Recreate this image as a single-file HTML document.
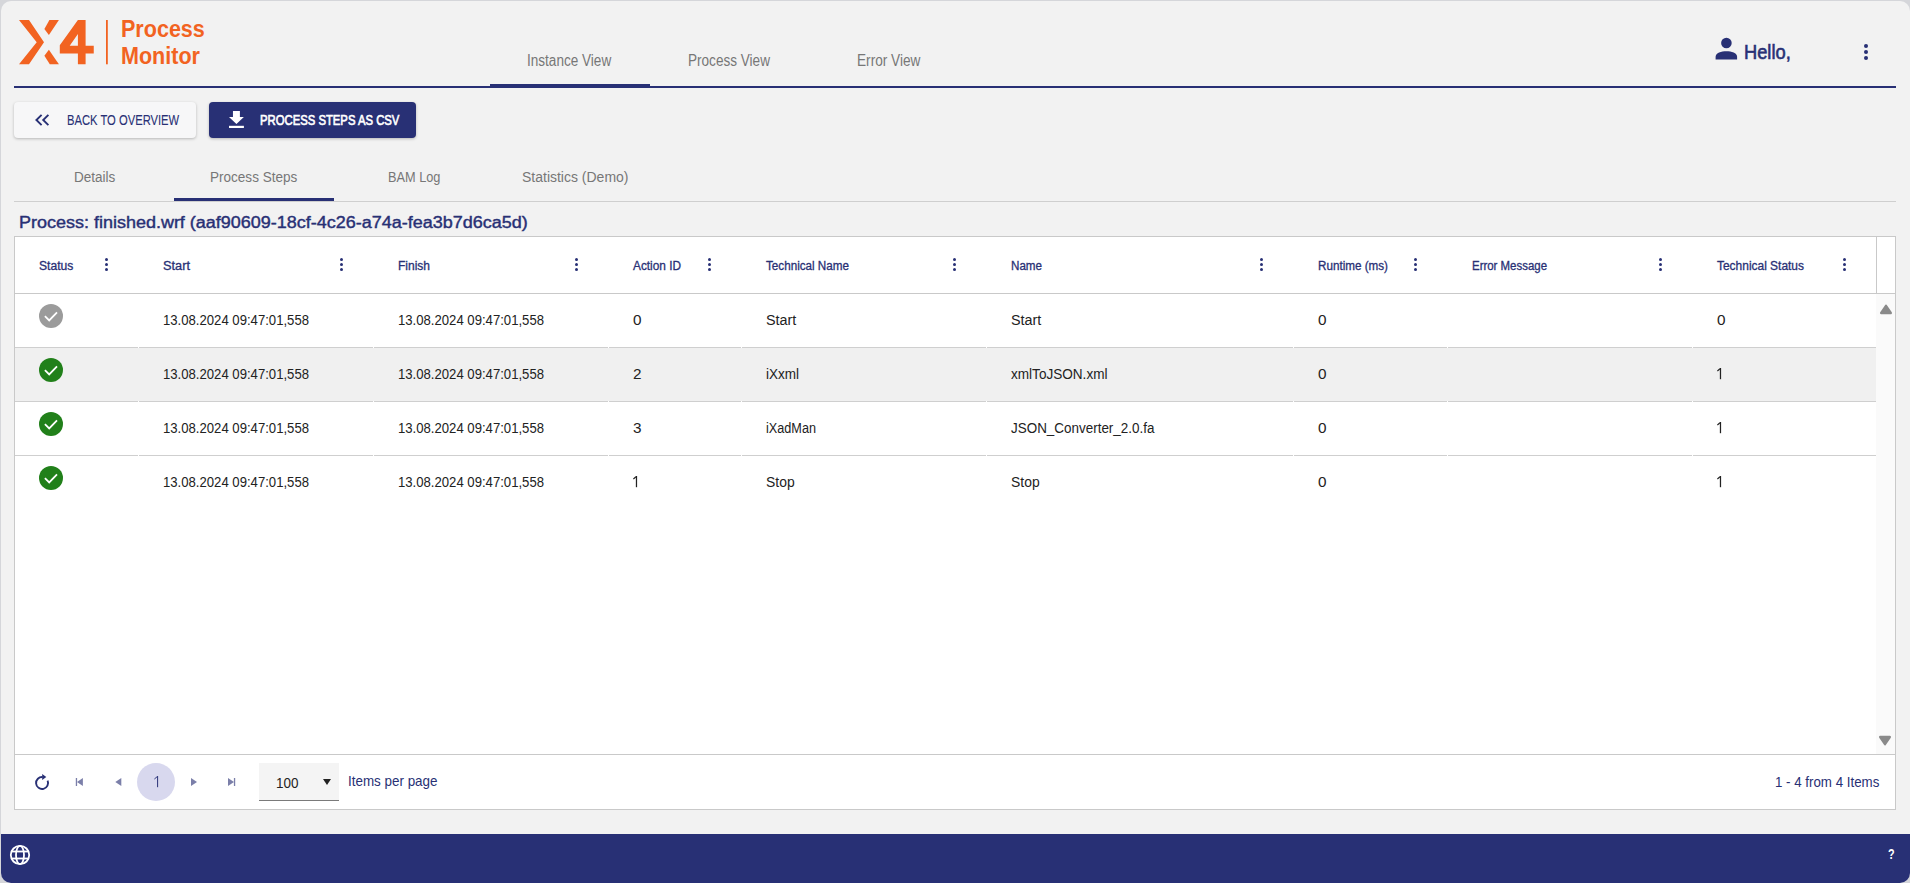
<!DOCTYPE html>
<html><head><meta charset="utf-8">
<style>
*{margin:0;padding:0;box-sizing:border-box}
html,body{width:1910px;height:883px;overflow:hidden;background:#d5d6da;font-family:"Liberation Sans",sans-serif}
.card{position:absolute;left:1px;top:1px;width:1909px;height:882px;background:#f2f2f2;border-radius:10px;overflow:hidden}
.t{position:absolute;white-space:nowrap;transform-origin:0 0}
.bm{display:inline-block;width:0;height:0;vertical-align:baseline}
.a{position:absolute}
.kb{position:absolute;width:3px;height:13px}
.kb i{position:absolute;left:0;width:3px;height:3px;border-radius:50%;background:#283075}
</style></head><body>
<div class="card"></div>
<!-- logo -->
<svg class="a" style="left:0;top:0" width="120" height="80" viewBox="0 0 120 80">
  <g fill="#f26321">
    <polygon points="19,20 29,20 44,42.2 29,64.3 19,64.3 36.7,42.2"/>
    <polygon points="49.4,20 58.9,20 48.9,34.9 44.4,29"/>
    <polygon points="48.9,49.8 58.9,64.3 49.8,64.3 44.4,55.7"/>
    <path d="M77.9,20 L85.6,20 L85.6,45.7 L93.75,45.7 L93.75,53.4 L85.6,53.4 L85.6,64.3 L77.9,64.3 L77.9,53.4 L59.8,53.4 L59.8,45.3 Z M77.9,34 L69.7,45.7 L77.9,45.7 Z" fill-rule="evenodd"/>
    <rect x="106" y="20" width="1.8" height="44.3"/>
  </g>
</svg>
<!-- nav line -->
<div class="a" style="left:14px;top:86px;width:1882px;height:2px;background:#283075"></div>
<div class="a" style="left:490px;top:84px;width:160px;height:4px;background:#283075"></div>
<!-- user icon -->
<svg class="a" style="left:1714px;top:36px" width="25" height="25" viewBox="0 0 25 25">
  <circle cx="12.4" cy="7.0" r="5.3" fill="#283075"/>
  <path d="M1.6,23.4 L1.6,21 C1.6,16.6 7.3,15.3 12.4,15.3 C17.5,15.3 23.1,16.6 23.1,21 L23.1,23.4 Z" fill="#283075"/>
</svg>
<!-- kebab top right -->
<div class="a" style="left:1864px;top:44px;width:4px;height:16px">
  <i class="a" style="left:0;top:0;width:4px;height:4px;border-radius:50%;background:#283075"></i>
  <i class="a" style="left:0;top:6px;width:4px;height:4px;border-radius:50%;background:#283075"></i>
  <i class="a" style="left:0;top:12px;width:4px;height:4px;border-radius:50%;background:#283075"></i>
</div>
<!-- buttons -->
<div class="a" style="left:14px;top:102px;width:182px;height:36px;background:#f7f7f8;border-radius:4px;box-shadow:0 1px 3px rgba(0,0,0,.25)"></div>
<svg class="a" style="left:34px;top:113px" width="16" height="14" viewBox="0 0 16 14">
  <path d="M7.6,1.9 L2.4,7 L7.6,12.1 M14.4,1.9 L9.2,7 L14.4,12.1" stroke="#283075" stroke-width="1.9" fill="none"/>
</svg>
<div class="a" style="left:209px;top:102px;width:207px;height:36px;background:#283075;border-radius:4px;box-shadow:0 1px 3px rgba(0,0,0,.25)"></div>
<svg class="a" style="left:228px;top:111px" width="17" height="18" viewBox="0 0 17 18">
  <path d="M4.95,0 L11.9,0 L11.9,6 L15.9,6 L8.43,13.1 L1,6 L4.95,6 Z" fill="#fff"/>
  <rect x="1" y="14.8" width="14.9" height="2.2" fill="#fff"/>
</svg>
<!-- subtabs line -->
<div class="a" style="left:14px;top:201px;width:1882px;height:1px;background:#cfcfcf"></div>
<div class="a" style="left:174px;top:198px;width:160px;height:3px;background:#283075"></div>
<!-- table -->
<div class="a" style="left:14px;top:236px;width:1882px;height:574px;background:#fff;border:1px solid #c9c9c9"></div>
<div class="a" style="left:15px;top:293px;width:1880px;height:1px;background:#c9c9c9"></div>
<div class="a" style="left:1876px;top:237px;width:1px;height:57px;background:#c9c9c9"></div>
<div class="a" style="left:1876px;top:294px;width:19px;height:460px;background:#fafafa"></div>
<div class="a" style="left:15px;top:348px;width:1861px;height:53px;background:#f0f0f0"></div>
<div class="a" style="left:15px;top:347px;width:123px;height:1px;background:#cfcfcf"></div>
<div class="a" style="left:139px;top:347px;width:234px;height:1px;background:#cfcfcf"></div>
<div class="a" style="left:374px;top:347px;width:234px;height:1px;background:#cfcfcf"></div>
<div class="a" style="left:609px;top:347px;width:132px;height:1px;background:#cfcfcf"></div>
<div class="a" style="left:742px;top:347px;width:244px;height:1px;background:#cfcfcf"></div>
<div class="a" style="left:987px;top:347px;width:306px;height:1px;background:#cfcfcf"></div>
<div class="a" style="left:1294px;top:347px;width:153px;height:1px;background:#cfcfcf"></div>
<div class="a" style="left:1448px;top:347px;width:244px;height:1px;background:#cfcfcf"></div>
<div class="a" style="left:1693px;top:347px;width:183px;height:1px;background:#cfcfcf"></div>
<div class="a" style="left:15px;top:401px;width:123px;height:1px;background:#cfcfcf"></div>
<div class="a" style="left:139px;top:401px;width:234px;height:1px;background:#cfcfcf"></div>
<div class="a" style="left:374px;top:401px;width:234px;height:1px;background:#cfcfcf"></div>
<div class="a" style="left:609px;top:401px;width:132px;height:1px;background:#cfcfcf"></div>
<div class="a" style="left:742px;top:401px;width:244px;height:1px;background:#cfcfcf"></div>
<div class="a" style="left:987px;top:401px;width:306px;height:1px;background:#cfcfcf"></div>
<div class="a" style="left:1294px;top:401px;width:153px;height:1px;background:#cfcfcf"></div>
<div class="a" style="left:1448px;top:401px;width:244px;height:1px;background:#cfcfcf"></div>
<div class="a" style="left:1693px;top:401px;width:183px;height:1px;background:#cfcfcf"></div>
<div class="a" style="left:15px;top:455px;width:123px;height:1px;background:#cfcfcf"></div>
<div class="a" style="left:139px;top:455px;width:234px;height:1px;background:#cfcfcf"></div>
<div class="a" style="left:374px;top:455px;width:234px;height:1px;background:#cfcfcf"></div>
<div class="a" style="left:609px;top:455px;width:132px;height:1px;background:#cfcfcf"></div>
<div class="a" style="left:742px;top:455px;width:244px;height:1px;background:#cfcfcf"></div>
<div class="a" style="left:987px;top:455px;width:306px;height:1px;background:#cfcfcf"></div>
<div class="a" style="left:1294px;top:455px;width:153px;height:1px;background:#cfcfcf"></div>
<div class="a" style="left:1448px;top:455px;width:244px;height:1px;background:#cfcfcf"></div>
<div class="a" style="left:1693px;top:455px;width:183px;height:1px;background:#cfcfcf"></div>
<div class="kb" style="left:105px;top:258px"><i style="top:0"></i><i style="top:5px"></i><i style="top:10px"></i></div>
<div class="kb" style="left:340px;top:258px"><i style="top:0"></i><i style="top:5px"></i><i style="top:10px"></i></div>
<div class="kb" style="left:575px;top:258px"><i style="top:0"></i><i style="top:5px"></i><i style="top:10px"></i></div>
<div class="kb" style="left:708px;top:258px"><i style="top:0"></i><i style="top:5px"></i><i style="top:10px"></i></div>
<div class="kb" style="left:953px;top:258px"><i style="top:0"></i><i style="top:5px"></i><i style="top:10px"></i></div>
<div class="kb" style="left:1260px;top:258px"><i style="top:0"></i><i style="top:5px"></i><i style="top:10px"></i></div>
<div class="kb" style="left:1414px;top:258px"><i style="top:0"></i><i style="top:5px"></i><i style="top:10px"></i></div>
<div class="kb" style="left:1659px;top:258px"><i style="top:0"></i><i style="top:5px"></i><i style="top:10px"></i></div>
<div class="kb" style="left:1843px;top:258px"><i style="top:0"></i><i style="top:5px"></i><i style="top:10px"></i></div>
<!-- status icons -->
<svg class="a" style="left:39px;top:304px" width="24" height="24" viewBox="0 0 24 24"><circle cx="12" cy="12" r="12" fill="#9b9b9b"/><path d="M5.9,12.2 L10.2,16.4 L18.0,8.4" stroke="#fff" stroke-width="1.8" fill="none"/></svg>
<svg class="a" style="left:39px;top:358px" width="24" height="24" viewBox="0 0 24 24"><circle cx="12" cy="12" r="12" fill="#21801a"/><path d="M5.9,12.2 L10.2,16.4 L18.0,8.4" stroke="#fff" stroke-width="1.8" fill="none"/></svg>
<svg class="a" style="left:39px;top:412px" width="24" height="24" viewBox="0 0 24 24"><circle cx="12" cy="12" r="12" fill="#21801a"/><path d="M5.9,12.2 L10.2,16.4 L18.0,8.4" stroke="#fff" stroke-width="1.8" fill="none"/></svg>
<svg class="a" style="left:39px;top:466px" width="24" height="24" viewBox="0 0 24 24"><circle cx="12" cy="12" r="12" fill="#21801a"/><path d="M5.9,12.2 L10.2,16.4 L18.0,8.4" stroke="#fff" stroke-width="1.8" fill="none"/></svg>
<!-- scroll arrows -->
<svg class="a" style="left:1878px;top:303px" width="16" height="12" viewBox="0 0 16 12"><path d="M3.2,10 L8,2.8 L12.8,10 Z" fill="#8a8a8a" stroke="#8a8a8a" stroke-width="2.4" stroke-linejoin="round"/></svg>
<svg class="a" style="left:1877.2px;top:734.5px" width="16" height="12" viewBox="0 0 16 12"><path d="M3.2,2 L8,9.2 L12.8,2 Z" fill="#8a8a8a" stroke="#8a8a8a" stroke-width="2.4" stroke-linejoin="round"/></svg>
<!-- pagination -->
<div class="a" style="left:15px;top:754px;width:1880px;height:1px;background:#c9c9c9"></div>
<svg class="a" style="left:33px;top:772px" width="18" height="20" viewBox="0 0 18 20">
  <path d="M14.6,8.6 A6,6 0 1 1 9.6,5" stroke="#283075" stroke-width="1.9" fill="none"/>
  <path d="M9.2,2.1 L13.3,5 L9.2,7.9 Z" fill="#283075"/>
</svg>
<svg class="a" style="left:74px;top:776px" width="12" height="12" viewBox="0 0 12 12"><rect x="1.8" y="2" width="1.3" height="8" fill="#7b7fa9"/><path d="M3,6 L8.9,2 L8.9,10 Z" fill="#7b7fa9"/></svg>
<svg class="a" style="left:113px;top:776px" width="12" height="12" viewBox="0 0 12 12"><path d="M2.3,6 L8.3,2 L8.3,10 Z" fill="#7b7fa9"/></svg>
<div class="a" style="left:137px;top:763px;width:38px;height:38px;border-radius:50%;background:#d8d8ee"></div>
<svg class="a" style="left:189px;top:776px" width="12" height="12" viewBox="0 0 12 12"><path d="M8,6 L2,2 L2,10 Z" fill="#7b7fa9"/></svg>
<svg class="a" style="left:226px;top:776px" width="12" height="12" viewBox="0 0 12 12"><path d="M8,6 L2,2 L2,10 Z" fill="#7b7fa9"/><rect x="7.9" y="2" width="1.3" height="8" fill="#7b7fa9"/></svg>
<div class="a" style="left:259px;top:763px;width:80px;height:38px;background:#f4f4f4;border-bottom:1px solid #7a7a7a"></div>
<svg class="a" style="left:321px;top:776px" width="12" height="12" viewBox="0 0 12 12"><path d="M2,3 L10,3 L6,9 Z" fill="#222"/></svg>
<!-- footer -->
<div class="a" style="left:1px;top:834px;width:1909px;height:49px;background:#283075;border-radius:0 0 10px 10px"></div>
<svg class="a" style="left:9px;top:844px" width="22" height="22" viewBox="0 0 22 22">
  <g stroke="#fff" stroke-width="1.8" fill="none">
    <circle cx="11" cy="11" r="9.2"/>
    <ellipse cx="11" cy="11" rx="4" ry="9.2"/>
    <line x1="2" y1="7.5" x2="20" y2="7.5"/>
    <line x1="2" y1="14.5" x2="20" y2="14.5"/>
  </g>
</svg>
<div class="t" id="t0" style="left:121.40px;top:18.00px;font-size:23px;line-height:23px;color:#f26321;font-weight:700;transform:scaleX(0.9363);">Process<span class="bm"></span></div>
<div class="t" id="t1" style="left:121.40px;top:45.01px;font-size:23px;line-height:23px;color:#f26321;font-weight:700;transform:scaleX(0.9359);">Monitor<span class="bm"></span></div>
<div class="t" id="t2" style="left:527.20px;top:53.01px;font-size:16px;line-height:16px;color:#777777;transform:scaleX(0.8475);">Instance View<span class="bm"></span></div>
<div class="t" id="t3" style="left:688.10px;top:53.01px;font-size:16px;line-height:16px;color:#777777;transform:scaleX(0.8480);">Process View<span class="bm"></span></div>
<div class="t" id="t4" style="left:857.10px;top:53.01px;font-size:16px;line-height:16px;color:#777777;transform:scaleX(0.8529);">Error View<span class="bm"></span></div>
<div class="t" id="t5" style="left:1743.60px;top:42.00px;font-size:20.5px;line-height:20.5px;color:#283075;transform:scaleX(0.8912);-webkit-text-stroke:0.6px #283075;">Hello,<span class="bm"></span></div>
<div class="t" id="t6" style="left:66.80px;top:113.01px;font-size:14px;line-height:14px;color:#283075;transform:scaleX(0.8011);-webkit-text-stroke:0.1px #283075;">BACK TO OVERVIEW<span class="bm"></span></div>
<div class="t" id="t7" style="left:260.40px;top:113.01px;font-size:14px;line-height:14px;color:#ffffff;transform:scaleX(0.8069);-webkit-text-stroke:0.65px #ffffff;">PROCESS STEPS AS CSV<span class="bm"></span></div>
<div class="t" id="t8" style="left:73.60px;top:169.00px;font-size:15.5px;line-height:15.5px;color:#777777;transform:scaleX(0.8713);">Details<span class="bm"></span></div>
<div class="t" id="t9" style="left:210.40px;top:169.00px;font-size:15.5px;line-height:15.5px;color:#777777;transform:scaleX(0.8734);">Process Steps<span class="bm"></span></div>
<div class="t" id="t10" style="left:387.70px;top:169.00px;font-size:15.5px;line-height:15.5px;color:#777777;transform:scaleX(0.8220);">BAM Log<span class="bm"></span></div>
<div class="t" id="t11" style="left:521.50px;top:169.00px;font-size:15.5px;line-height:15.5px;color:#777777;transform:scaleX(0.9025);">Statistics (Demo)<span class="bm"></span></div>
<div class="t" id="t12" style="left:19.00px;top:215.00px;font-size:16px;line-height:16px;color:#283075;transform:scaleX(1.1237);-webkit-text-stroke:0.4px #283075;">Process: finished.wrf (aaf90609-18cf-4c26-a74a-fea3b7d6ca5d)<span class="bm"></span></div>
<div class="t" id="t13" style="left:39.30px;top:260.01px;font-size:12.3px;line-height:12.3px;color:#283075;transform:scaleX(0.9842);-webkit-text-stroke:0.3px #283075;">Status<span class="bm"></span></div>
<div class="t" id="t14" style="left:163.30px;top:260.01px;font-size:12.3px;line-height:12.3px;color:#283075;transform:scaleX(1.0385);-webkit-text-stroke:0.3px #283075;">Start<span class="bm"></span></div>
<div class="t" id="t15" style="left:398.30px;top:260.01px;font-size:12.3px;line-height:12.3px;color:#283075;transform:scaleX(0.9756);-webkit-text-stroke:0.3px #283075;">Finish<span class="bm"></span></div>
<div class="t" id="t16" style="left:633.30px;top:260.01px;font-size:12.3px;line-height:12.3px;color:#283075;transform:scaleX(0.9619);-webkit-text-stroke:0.3px #283075;">Action ID<span class="bm"></span></div>
<div class="t" id="t17" style="left:766.30px;top:260.01px;font-size:12.3px;line-height:12.3px;color:#283075;transform:scaleX(0.9486);-webkit-text-stroke:0.3px #283075;">Technical Name<span class="bm"></span></div>
<div class="t" id="t18" style="left:1011.30px;top:260.01px;font-size:12.3px;line-height:12.3px;color:#283075;transform:scaleX(0.9451);-webkit-text-stroke:0.3px #283075;">Name<span class="bm"></span></div>
<div class="t" id="t19" style="left:1318.30px;top:260.01px;font-size:12.3px;line-height:12.3px;color:#283075;transform:scaleX(0.9485);-webkit-text-stroke:0.3px #283075;">Runtime (ms)<span class="bm"></span></div>
<div class="t" id="t20" style="left:1472.30px;top:260.01px;font-size:12.3px;line-height:12.3px;color:#283075;transform:scaleX(0.9299);-webkit-text-stroke:0.3px #283075;">Error Message<span class="bm"></span></div>
<div class="t" id="t21" style="left:1717.30px;top:260.01px;font-size:12.3px;line-height:12.3px;color:#283075;transform:scaleX(0.9715);-webkit-text-stroke:0.3px #283075;">Technical Status<span class="bm"></span></div>
<div class="t" id="t22" style="left:163.00px;top:312.01px;font-size:15.3px;line-height:15.3px;color:#222222;transform:scaleX(0.8581);">13.08.2024 09:47:01,558<span class="bm"></span></div>
<div class="t" id="t23" style="left:398.00px;top:312.01px;font-size:15.3px;line-height:15.3px;color:#222222;transform:scaleX(0.8581);">13.08.2024 09:47:01,558<span class="bm"></span></div>
<div class="t" id="t24" style="left:633.00px;top:312.01px;font-size:15.3px;line-height:15.3px;color:#222222;">0<span class="bm"></span></div>
<div class="t" id="t25" style="left:766.00px;top:312.01px;font-size:15.3px;line-height:15.3px;color:#222222;transform:scaleX(0.9381);">Start<span class="bm"></span></div>
<div class="t" id="t26" style="left:1011.00px;top:312.01px;font-size:15.3px;line-height:15.3px;color:#222222;transform:scaleX(0.9381);">Start<span class="bm"></span></div>
<div class="t" id="t27" style="left:1318.00px;top:312.01px;font-size:15.3px;line-height:15.3px;color:#222222;">0<span class="bm"></span></div>
<div class="t" id="t28" style="left:1717.00px;top:312.01px;font-size:15.3px;line-height:15.3px;color:#222222;">0<span class="bm"></span></div>
<div class="t" id="t29" style="left:163.00px;top:366.01px;font-size:15.3px;line-height:15.3px;color:#222222;transform:scaleX(0.8581);">13.08.2024 09:47:01,558<span class="bm"></span></div>
<div class="t" id="t30" style="left:398.00px;top:366.01px;font-size:15.3px;line-height:15.3px;color:#222222;transform:scaleX(0.8581);">13.08.2024 09:47:01,558<span class="bm"></span></div>
<div class="t" id="t31" style="left:633.00px;top:366.01px;font-size:15.3px;line-height:15.3px;color:#222222;">2<span class="bm"></span></div>
<div class="t" id="t32" style="left:766.00px;top:366.01px;font-size:15.3px;line-height:15.3px;color:#222222;transform:scaleX(0.8824);">iXxml<span class="bm"></span></div>
<div class="t" id="t33" style="left:1011.00px;top:366.01px;font-size:15.3px;line-height:15.3px;color:#222222;transform:scaleX(0.8869);">xmlToJSON.xml<span class="bm"></span></div>
<div class="t" id="t34" style="left:1318.00px;top:366.01px;font-size:15.3px;line-height:15.3px;color:#222222;">0<span class="bm"></span></div>
<div class="t" id="t35" style="left:163.00px;top:420.01px;font-size:15.3px;line-height:15.3px;color:#222222;transform:scaleX(0.8581);">13.08.2024 09:47:01,558<span class="bm"></span></div>
<div class="t" id="t36" style="left:398.00px;top:420.01px;font-size:15.3px;line-height:15.3px;color:#222222;transform:scaleX(0.8581);">13.08.2024 09:47:01,558<span class="bm"></span></div>
<div class="t" id="t37" style="left:633.00px;top:420.01px;font-size:15.3px;line-height:15.3px;color:#222222;">3<span class="bm"></span></div>
<div class="t" id="t38" style="left:766.00px;top:420.01px;font-size:15.3px;line-height:15.3px;color:#222222;transform:scaleX(0.8278);">iXadMan<span class="bm"></span></div>
<div class="t" id="t39" style="left:1011.00px;top:420.01px;font-size:15.3px;line-height:15.3px;color:#222222;transform:scaleX(0.8788);">JSON_Converter_2.0.fa<span class="bm"></span></div>
<div class="t" id="t40" style="left:1318.00px;top:420.01px;font-size:15.3px;line-height:15.3px;color:#222222;">0<span class="bm"></span></div>
<div class="t" id="t41" style="left:163.00px;top:474.01px;font-size:15.3px;line-height:15.3px;color:#222222;transform:scaleX(0.8581);">13.08.2024 09:47:01,558<span class="bm"></span></div>
<div class="t" id="t42" style="left:398.00px;top:474.01px;font-size:15.3px;line-height:15.3px;color:#222222;transform:scaleX(0.8581);">13.08.2024 09:47:01,558<span class="bm"></span></div>
<div class="t" id="t43" style="left:766.00px;top:474.01px;font-size:15.3px;line-height:15.3px;color:#222222;transform:scaleX(0.9094);">Stop<span class="bm"></span></div>
<div class="t" id="t44" style="left:1011.00px;top:474.01px;font-size:15.3px;line-height:15.3px;color:#222222;transform:scaleX(0.9094);">Stop<span class="bm"></span></div>
<div class="t" id="t45" style="left:1318.00px;top:474.01px;font-size:15.3px;line-height:15.3px;color:#222222;">0<span class="bm"></span></div>
<div class="t" id="t46" style="left:275.70px;top:775.01px;font-size:15px;line-height:15px;color:#222222;transform:scaleX(0.8982);">100<span class="bm"></span></div>
<div class="t" id="t47" style="left:347.90px;top:773.01px;font-size:15px;line-height:15px;color:#283075;transform:scaleX(0.8946);">Items per page<span class="bm"></span></div>
<div class="t" id="t48" style="left:1774.50px;top:774.00px;font-size:15px;line-height:15px;color:#283075;transform:scaleX(0.8873);">1 - 4 from 4 Items<span class="bm"></span></div>
<div class="t" id="t49" style="left:1888.40px;top:846.01px;font-size:15px;line-height:15px;color:#ffffff;font-weight:700;transform:scaleX(0.7213);">?<span class="bm"></span></div>
<svg class="a" style="left:1717.00px;top:367.80px" width="6" height="12" viewBox="0 0 6 12"><rect x="2.85" y="0" width="1.25" height="11.2" fill="#222222"/><path d="M0.4,3.0 L3.0,0.8" stroke="#222222" stroke-width="1.16" fill="none"/></svg>
<svg class="a" style="left:1717.00px;top:421.80px" width="6" height="12" viewBox="0 0 6 12"><rect x="2.85" y="0" width="1.25" height="11.2" fill="#222222"/><path d="M0.4,3.0 L3.0,0.8" stroke="#222222" stroke-width="1.16" fill="none"/></svg>
<svg class="a" style="left:633.00px;top:475.80px" width="6" height="12" viewBox="0 0 6 12"><rect x="2.85" y="0" width="1.25" height="11.2" fill="#222222"/><path d="M0.4,3.0 L3.0,0.8" stroke="#222222" stroke-width="1.16" fill="none"/></svg>
<svg class="a" style="left:1717.00px;top:475.80px" width="6" height="12" viewBox="0 0 6 12"><rect x="2.85" y="0" width="1.25" height="11.2" fill="#222222"/><path d="M0.4,3.0 L3.0,0.8" stroke="#222222" stroke-width="1.16" fill="none"/></svg>
<svg class="a" style="left:153.90px;top:775.60px" width="6" height="12" viewBox="0 0 6 12"><rect x="3.10" y="0" width="1.0" height="11.2" fill="#283075"/><path d="M0.4,3.0 L3.0,0.8" stroke="#283075" stroke-width="0.93" fill="none"/></svg>
</body></html>
